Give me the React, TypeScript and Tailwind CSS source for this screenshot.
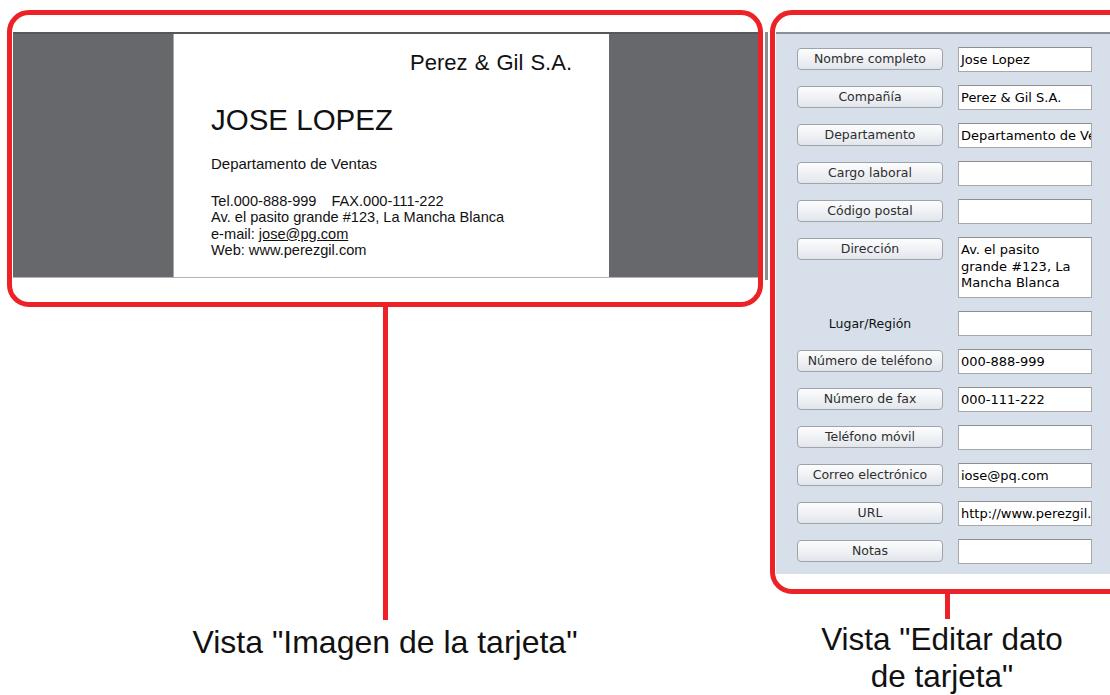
import React from "react";

const fields: { label: string; value: string; button?: boolean; multi?: boolean }[] = [
  { label: "Nombre completo", value: "Jose Lopez", button: true },
  { label: "Compañía", value: "Perez & Gil S.A.", button: true },
  { label: "Departamento", value: "Departamento de Ventas", button: true },
  { label: "Cargo laboral", value: "", button: true },
  { label: "Código postal", value: "", button: true },
  { label: "Dirección", value: "Av. el pasito grande #123, La Mancha Blanca", button: true, multi: true },
  { label: "Lugar/Región", value: "" },
  { label: "Número de teléfono", value: "000-888-999", button: true },
  { label: "Número de fax", value: "000-111-222", button: true },
  { label: "Teléfono móvil", value: "", button: true },
  { label: "Correo electrónico", value: "iose@pq.com", button: true },
  { label: "URL", value: "http://www.perezgil.com", button: true },
  { label: "Notas", value: "", button: true },
];

const BusinessCard = () => (
  <div className="w-[436px] h-[243px] bg-white border-l border-[#a9a9ab] pl-[37px] pr-[37px] pt-[16px] text-[#111] font-['Liberation_Sans',Arial,sans-serif]">
    <div className="text-right text-[22px] leading-[26px] [word-spacing:1px]">Perez &amp; Gil S.A.</div>
    <div className="mt-[27px] text-[29.5px] leading-[34px]">JOSE LOPEZ</div>
    <div className="mt-[18px] text-[15px] leading-[18px]">Departamento de Ventas</div>
    <div className="mt-[20px] text-[14.6px] leading-[16.4px]">
      <div>
        Tel.000-888-999<span className="ml-[15px]">FAX.000-111-222</span>
      </div>
      <div>Av. el pasito grande #123, La Mancha Blanca</div>
      <div>
        e-mail: <span className="underline">jose@pg.com</span>
      </div>
      <div>Web: www.perezgil.com</div>
    </div>
  </div>
);

const FieldRow = ({ label, value, button, multi }: (typeof fields)[number]) => (
  <div className="flex items-start gap-[15px]">
    {button ? (
      <div className="mt-[1px] w-[146px] h-[22px] shrink-0 rounded-[4px] border border-[#9ea3aa] bg-gradient-to-b from-[#fdfdfe] to-[#e2e6eb] text-center text-[12.5px] leading-[20px] text-[#2e2e2e] whitespace-nowrap">
        {label}
      </div>
    ) : (
      <div className="w-[146px] h-[25px] shrink-0 text-center text-[12.5px] leading-[25px] text-[#111]">{label}</div>
    )}
    <div
      className={
        multi
          ? "w-[134px] h-[61px] shrink-0 bg-white border border-[#a8a8a8] border-t-[#8e8e8e] px-[2px] pt-[4px] text-[13px] leading-[16.7px] text-black overflow-hidden"
          : "w-[134px] h-[25px] shrink-0 bg-white border border-[#a8a8a8] border-t-[#8e8e8e] px-[2px] text-[13px] leading-[23px] text-black whitespace-nowrap overflow-hidden"
      }
    >
      {value}
    </div>
  </div>
);

export default function App() {
  return (
    <div className="w-[1110px] h-[695px] overflow-hidden bg-white flex pt-[10px] pl-[7px] font-['Liberation_Sans',Arial,sans-serif]">
      {/* Vista imagen */}
      <div className="w-[756px] shrink-0 flex flex-col items-center">
        <div className="self-stretch border-[5px] border-[#ec2227] rounded-[22px] pt-[17px] pb-[24px] pl-[1px]">
          <div className="h-[246px] bg-[#67686c] border-t-2 border-[#56575b] border-b border-b-[#b4b4b4] pl-[160px]">
            <BusinessCard />
          </div>
        </div>
        <div className="w-[5px] h-[313px] bg-[#ec2227]" />
        <div className="mt-[4px] text-[32px] leading-[37px] text-[#111] whitespace-nowrap">
          Vista "Imagen de la tarjeta"
        </div>
      </div>

      {/* separador */}
      <div className="ml-[2px] mt-[22px] w-[3px] h-[248px] bg-[#8d8d8d] shrink-0" />

      {/* Vista editar */}
      <div className="ml-[2px] w-[360px] shrink-0 flex flex-col">
        <div className="border-[5px] border-[#ec2227] rounded-[22px] pt-[17px] pb-[15px] pl-[1px]">
          <div className="h-[542px] bg-[#d7e0ea] border-t-2 border-[#8a8f96] pl-[21px] pt-[13px] flex flex-col gap-[13px] font-['DejaVu_Sans',sans-serif]">
            {fields.map((f) => (
              <FieldRow key={f.label} {...f} />
            ))}
          </div>
        </div>
        <div className="ml-[175px] w-[5px] h-[28px] bg-[#ec2227]" />
        <div className="w-[344px] mt-[2px] text-center text-[31.5px] leading-[37px] text-[#111]">
          Vista "Editar dato
          <br />
          de tarjeta"
        </div>
      </div>
    </div>
  );
}
